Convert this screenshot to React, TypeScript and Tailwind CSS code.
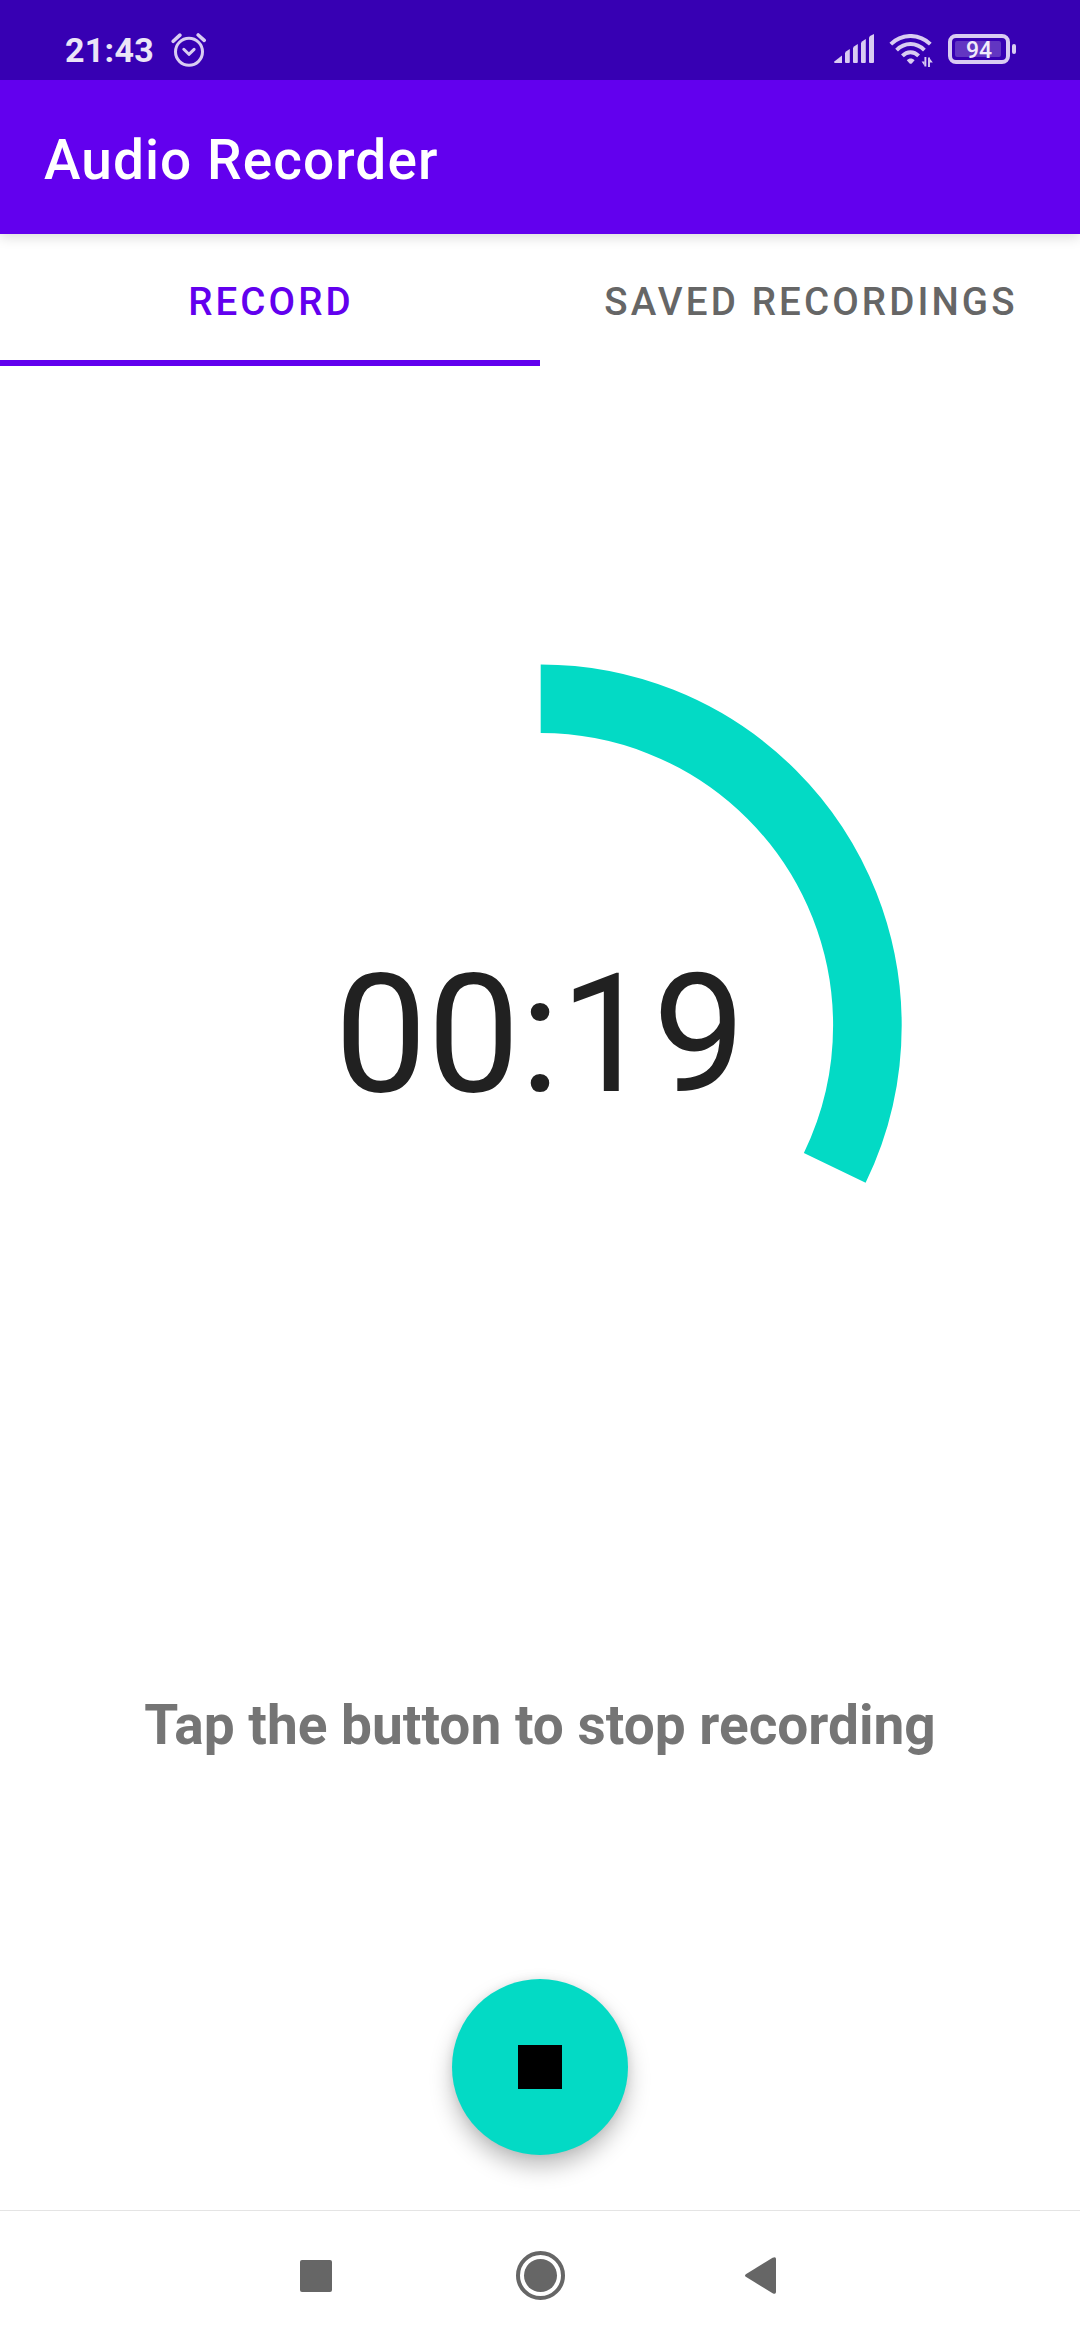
import React from "react";

function AlarmIcon() {
  return (
    <svg width="36" height="36" viewBox="0 0 36 36" fill="none" stroke="#d9ccf2" className="ml-[16.5px] mt-[32px]">
      <circle cx="18" cy="19.8" r="13.5" strokeWidth="3" />
      <path d="M12.8 17.3l5.1 5 5.2-5" strokeWidth="3" strokeLinecap="round" strokeLinejoin="round" />
      <path d="M2.2 9.3l6.7-6.2M33.2 8.3l-6-5.3" strokeWidth="3.6" strokeLinecap="round" />
    </svg>
  );
}

function SignalIcon() {
  return (
    <svg width="41" height="30" viewBox="0 0 41 30" fill="#d9ccf2" className="mt-[34px]">
      <path d="M0 27.7L8 21.4V29H1.2Q0 29 0 27.7Z" />
      <path d="M11 19l1-1.6 3.8-2.3V28q0 1-1 1H12q-1 0-1-1Z" />
      <path d="M19 14l1-1.6 3.8-2.4V28q0 1-1 1H20q-1 0-1-1Z" />
      <path d="M27 9l1-1.6 3.8-2.4V28q0 1-1 1H28q-1 0-1-1Z" />
      <path d="M35 3.5l1-1.6L40 0V28q0 1-1 1h-3q-1 0-1-1Z" />
    </svg>
  );
}

function WifiIcon() {
  return (
    <svg width="44" height="34" viewBox="0 0 44 34" fill="none" stroke="#d9ccf2" strokeWidth="3.9" className="ml-[14px] mt-[34px]">
      <path d="M1.8 10.1C12.9-.8 30.1-.8 41.3 10.1" />
      <path d="M7.6 16.1C15.7 8 27.3 8 35.4 16.1" />
      <path d="M13.4 21.9C18.2 17 24.8 17 29.6 21.9" />
      <path d="M17.8 26.2C20 23.9 23.4 23.9 25.6 26.2L23 29.2Q21.7 30.4 20.4 29.2Z" fill="#d9ccf2" stroke="none" />
      <path d="M36.4 23v9.4M40 23.4V33" strokeWidth="1.9" />
      <path d="M35.6 32l-3-4.6h3ZM40.8 24.4l3 4h-3Z" fill="#d9ccf2" stroke="none" />
    </svg>
  );
}

function Battery({ level }: { level: number }) {
  return (
    <div className="ml-[15px] mt-[34px] flex h-[30px] items-center">
      <div className="h-[30px] w-[62px] rounded-[8px] border-[4px] border-[#d9ccf2] p-[3px]">
        <div className="flex h-[16px] w-[46px] items-center justify-center rounded-[2px] bg-[#6236c2] pl-[2px] pt-[2px]">
          <span className="text-[23px] font-medium leading-none text-[#f1ecfb]">{level}</span>
        </div>
      </div>
      <div className="ml-[2px] h-[10px] w-[4px] rounded-[2px] bg-[#d9ccf2]" />
    </div>
  );
}

function StatusBar() {
  return (
    <div className="relative z-10 flex h-[80px] shrink-0 items-start justify-between bg-[#3700b3] pl-[65px] pr-[64px]">
      <div className="flex">
        <span className="mt-[30px] text-[34px] font-bold leading-[40px] tracking-[0.3px] text-[#ebe5f7]">21:43</span>
        <AlarmIcon />
      </div>
      <div className="flex">
        <SignalIcon />
        <WifiIcon />
        <Battery level={94} />
      </div>
    </div>
  );
}

function Tabs() {
  return (
    <div className="grid h-[132px] shrink-0 grid-cols-2 text-[38.5px] font-medium tracking-[3.12px]">
      <button className="border-b-[6px] border-[#6200ee] pl-[2px] pt-[10px] text-[#6200ee]">RECORD</button>
      <button className="border-b-[6px] border-transparent pl-[2px] pt-[10px] text-[#666666]">SAVED RECORDINGS</button>
    </div>
  );
}

const RADIUS = 326.7;
const SWEEP = 115.8;

function Timer() {
  const circumference = 2 * Math.PI * RADIUS;
  const length = (SWEEP / 360) * circumference;
  return (
    <div className="mx-auto mt-[298px] grid h-[723px] w-[723px] shrink-0 place-items-center">
      <svg width="723" height="723" viewBox="0 0 723 723" fill="none" className="col-start-1 row-start-1">
        <circle
          cx="361.7"
          cy="361.5"
          r={RADIUS}
          stroke="#03dac5"
          strokeWidth="68.6"
          strokeDasharray={`${length} ${circumference}`}
          transform="rotate(-90 361.7 361.5)"
        />
      </svg>
      <span className="col-start-1 row-start-1 mt-[19px] text-[165px] leading-[194px] text-[#212121]">00:19</span>
    </div>
  );
}

function NavigationBar() {
  return (
    <div className="mt-auto flex h-[130px] shrink-0 items-center border-t border-[#e4e4e4] pl-[300px]">
      <div className="h-[32px] w-[32px] rounded-[2px] bg-[#666666]" />
      <svg width="49" height="49" viewBox="0 0 49 49" className="ml-[184px]">
        <circle cx="24.5" cy="24.5" r="22.5" fill="none" stroke="#666666" strokeWidth="4" />
        <circle cx="24.5" cy="24.5" r="16.5" fill="#666666" />
      </svg>
      <svg width="31" height="37" viewBox="0 0 31 37" className="ml-[180px]">
        <path d="M.8 17.2L27.6.8Q31-.8 31 2V35Q31 37.8 27.6 36.2L.8 19.8Q-.8 18.5 .8 17.2Z" fill="#666666" />
      </svg>
    </div>
  );
}

export default function App() {
  return (
    <div className="flex h-[2340px] w-[1080px] flex-col overflow-hidden bg-white font-['Roboto',sans-serif]">
      <StatusBar />
      <header className="flex h-[154px] shrink-0 items-center bg-[#6200ee] pl-[44px] pt-[5px] shadow-[0_3px_12px_rgba(0,0,0,0.15)]">
        <h1 className="text-[55px] font-medium leading-[64px] tracking-[1.07px] text-white">Audio Recorder</h1>
      </header>
      <Tabs />
      <Timer />
      <p className="mt-[306px] text-center text-[55px] font-bold leading-[64px] text-[#757575]">
        Tap the button to stop recording
      </p>
      <button
        aria-label="Stop recording"
        className="mx-auto mt-[222px] grid h-[176px] w-[176px] shrink-0 place-items-center rounded-full bg-[#03dac5] shadow-[0_12px_22px_rgba(0,0,0,0.25),0_0px_10px_rgba(0,0,0,0.08)]"
      >
        <span className="h-[44px] w-[44px] bg-black" />
      </button>
      <NavigationBar />
    </div>
  );
}
